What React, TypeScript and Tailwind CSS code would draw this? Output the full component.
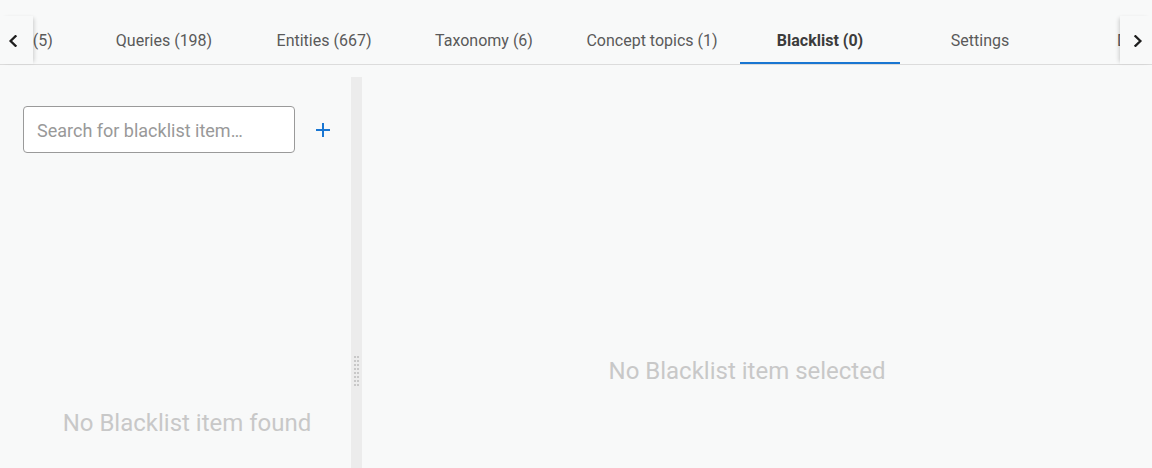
import React from "react";

const tabs = [
  { label: "Synonyms (5)", w: "w-[160px]" },
  { label: "Queries (198)", w: "w-[160px]" },
  { label: "Entities (667)", w: "w-[160px]" },
  { label: "Taxonomy (6)", w: "w-[160px]" },
  { label: "Concept topics (1)", w: "w-[176px]" },
  { label: "Blacklist (0)", w: "w-[160px]", active: true },
  { label: "Settings", w: "w-[160px]" },
  { label: "Debug", w: "w-[160px]" },
];

export default function App() {
  return (
    <div
      className="w-[1152px] h-[468px] overflow-hidden bg-[#f8f9f9] flex flex-col"
      style={{ fontFamily: "Roboto, 'Liberation Sans', sans-serif" }}
    >
      <div className="h-[16px] shrink-0" />
      <div className="h-[49px] shrink-0 flex border-b border-[#dcdcdc] relative">
        <button className="w-[33px] h-[48px] shrink-0 flex items-center justify-start pl-[7px] pt-[2px] bg-[#f8f9f9] relative z-10 shadow-[3px_0_4px_-2px_rgba(0,0,0,0.18)]">
          <svg width="12" height="12" viewBox="0 0 12 12" fill="none" stroke="#1e1e1e" strokeWidth="2.3" strokeLinecap="square">
            <path d="M8.5 1.2 L3.6 6 L8.5 10.8" />
          </svg>
        </button>
        <div className="flex-1 overflow-hidden relative">
          <div className="flex ml-[-109px] h-[48px]">
            {tabs.map((t) => (
              <div
                key={t.label}
                className={`${t.w} shrink-0 h-[48px] flex items-center justify-center pt-[2px] text-[16px] relative ${
                  t.active ? "font-bold text-[#3c3c3c]" : "text-[#5a5a5a]"
                }`}
              >
                <span className="whitespace-nowrap">{t.label}</span>
                {t.active && (
                  <div className="absolute left-0 right-0 bottom-0 h-[2px] bg-[#1976d2]" />
                )}
              </div>
            ))}
          </div>
        </div>
        <button className="w-[32px] h-[48px] shrink-0 flex items-center justify-end pr-[8px] pt-[2px] bg-[#f8f9f9] relative z-10 shadow-[-3px_0_4px_-2px_rgba(0,0,0,0.18)]">
          <svg width="12" height="12" viewBox="0 0 12 12" fill="none" stroke="#1e1e1e" strokeWidth="2.3" strokeLinecap="square">
            <path d="M3.5 1.2 L8.4 6 L3.5 10.8" />
          </svg>
        </button>
      </div>
      <div className="flex-1 flex pt-[12px] min-h-0">
        <div className="w-[351px] shrink-0 flex flex-col">
          <div className="flex items-center pl-[23px] pt-[29px]">
            <div className="w-[272px] h-[47px] border border-[#9a9a9a] rounded-[4px] bg-white flex items-center px-[13px] pt-[1px]">
              <span className="text-[18px] text-[#999] whitespace-nowrap">Search for blacklist item…</span>
            </div>
            <div className="ml-[21px] w-[14px] h-[14px] relative">
              <div className="absolute left-0 right-0 top-[6px] h-[2px] bg-[#1976d2]" />
              <div className="absolute top-0 bottom-0 left-[6px] w-[2px] bg-[#1976d2]" />
            </div>
          </div>
          <div className="pl-[23px] pt-[252px] text-center text-[24px] text-[#c8c8c8]">
            No Blacklist item found
          </div>
        </div>
        <div className="w-[11px] shrink-0 bg-[#ececec] flex items-start justify-center">
          <div className="grid grid-cols-2 gap-x-[1px] gap-y-[2px] mt-[279px]">
            {Array.from({ length: 16 }).map((_, i) => (
              <div key={i} className="w-[2px] h-[2px] bg-[#c8c8c8]" />
            ))}
          </div>
        </div>
        <div className="flex-1 flex flex-col items-center">
          <div className="pt-[276px] pr-[20px] text-[24px] text-[#c8c8c8]">
            No Blacklist item selected
          </div>
        </div>
      </div>
    </div>
  );
}
